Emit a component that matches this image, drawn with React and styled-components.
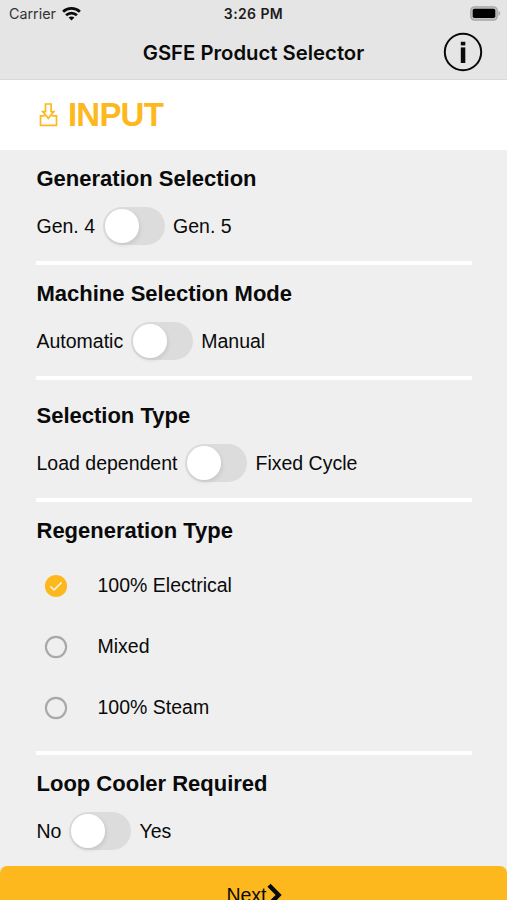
import React, { useState } from 'react';
import styled, { createGlobalStyle } from 'styled-components';

const REGENERATION_TYPES = ['100% Electrical', 'Mixed', '100% Steam'];

const WifiIcon = () => (
  <svg width="19" height="14" viewBox="0 0 19 14" fill="none" stroke="#0b0b0b" strokeWidth="2.7">
    <path d="M1.1 4.7 C5.6 0.3 13.4 0.3 17.9 4.7" />
    <path d="M4.1 8.2 C7 5.3 12 5.3 14.9 8.2" />
    <path d="M9.5 13.4 L6.6 10.5 C8.3 9 10.7 9 12.4 10.5 Z" fill="#0b0b0b" stroke="none" />
  </svg>
);

const BatteryIcon = () => (
  <svg width="31" height="15" viewBox="0 0 31 15">
    <rect x="0.8" y="0.8" width="26.4" height="13.2" rx="3.6" fill="#c0c0c0" stroke="#a6a6a6" strokeWidth="1.3" />
    <rect x="2.7" y="2.7" width="22.6" height="9.4" rx="1.8" fill="#000" />
    <path d="M28.5 5 C30.6 5.6 30.6 9.2 28.5 9.8 Z" fill="#a6a6a6" />
  </svg>
);

const InfoIcon = () => (
  <svg width="40" height="40" viewBox="0 0 40 40">
    <circle cx="20" cy="20" r="18.2" fill="none" stroke="#0a0a0a" strokeWidth="2" />
    <rect x="17.8" y="9.8" width="4.5" height="3.6" fill="#0a0a0a" />
    <rect x="17.8" y="15.4" width="4.5" height="15.6" fill="#0a0a0a" />
  </svg>
);

const InputIcon = () => (
  <svg width="19" height="24" viewBox="0 0 19 24" fill="none" stroke="#fdb81e" strokeWidth="1.7">
    <path d="M6.5 1 H12.1 V8.6 H14.8 L9.3 15.4 L3.8 8.6 H6.5 Z" />
    <path d="M5.8 12.8 H1.5 V22.3 H17.5 V12.8 H12.8" />
  </svg>
);

const CheckIcon = () => (
  <svg width="24" height="24" viewBox="0 0 24 24">
    <circle cx="12" cy="12" r="11.1" fill="#fdb81e" />
    <path d="M6.3 12.4 L10 16 L17.6 8.4" fill="none" stroke="#fff6e0" strokeWidth="1.5" />
  </svg>
);

const CircleIcon = () => (
  <svg width="24" height="24" viewBox="0 0 24 24">
    <circle cx="12" cy="12" r="10.1" fill="none" stroke="#a8a8a8" strokeWidth="2.1" />
  </svg>
);

const ChevronIcon = () => (
  <svg width="16" height="24" viewBox="0 0 16 24" fill="none" stroke="#0a0a0a" strokeWidth="4.4">
    <path d="M2 2.2 L11.6 12 L2 21.8" />
  </svg>
);

const ToggleSection = ({ title, off, on, spaced, last }) => {
  const [enabled, setEnabled] = useState(false);

  return (
    <Section $spaced={spaced} $last={last}>
      <SectionTitle>{title}</SectionTitle>
      <ToggleRow>
        <Label>{off}</Label>
        <Switch
          type="button"
          role="switch"
          aria-checked={enabled}
          aria-label={title}
          $enabled={enabled}
          onClick={() => setEnabled(!enabled)}
        >
          <Thumb />
        </Switch>
        <Label>{on}</Label>
      </ToggleRow>
    </Section>
  );
};

const App = () => {
  const [regeneration, setRegeneration] = useState(REGENERATION_TYPES[0]);

  return (
    <Screen>
      <GlobalStyle />
      <Header>
        <StatusBar>
          <Carrier>
            Carrier
            <WifiIcon />
          </Carrier>
          <Clock>3:26 PM</Clock>
          <Battery>
            <BatteryIcon />
          </Battery>
        </StatusBar>
        <NavBar>
          <NavTitle>GSFE Product Selector</NavTitle>
          <InfoButton type="button" aria-label="Info">
            <InfoIcon />
          </InfoButton>
        </NavBar>
      </Header>

      <Banner>
        <InputIcon />
        <BannerTitle>INPUT</BannerTitle>
      </Banner>

      <Content>
        <ToggleSection title="Generation Selection" off="Gen. 4" on="Gen. 5" />
        <ToggleSection title="Machine Selection Mode" off="Automatic" on="Manual" />
        <ToggleSection title="Selection Type" off="Load dependent" on="Fixed Cycle" spaced />

        <Section>
          <SectionTitle>Regeneration Type</SectionTitle>
          <RadioList>
            {REGENERATION_TYPES.map((type) => (
              <RadioRow key={type} type="button" onClick={() => setRegeneration(type)}>
                {regeneration === type ? <CheckIcon /> : <CircleIcon />}
                <RadioLabel>{type}</RadioLabel>
              </RadioRow>
            ))}
          </RadioList>
        </Section>

        <ToggleSection title="Loop Cooler Required" off="No" on="Yes" last />
      </Content>

      <NextButton type="button">
        <Label>Next</Label>
        <ChevronIcon />
      </NextButton>
    </Screen>
  );
};

const GlobalStyle = createGlobalStyle`
  * {
    box-sizing: border-box;
  }

  body {
    margin: 0;
    background-color: #efefef;
  }

  svg {
    display: block;
    flex-shrink: 0;
  }

  button {
    padding: 0;
    border: none;
    background: none;
    font: inherit;
    color: inherit;
    cursor: pointer;
  }
`;

const Screen = styled.div`
  display: flex;
  flex-direction: column;
  height: 100vh;
  overflow: hidden;
  background-color: #efefef;
  color: #0a0a0a;
  font-family: 'Liberation Sans', Arial, sans-serif;
`;

const Header = styled.header`
  flex-shrink: 0;
  height: 80px;
  background-color: #e5e5e5;
  border-bottom: 1px solid #d9d9d9;
  font-family: Inter, sans-serif;
`;

const StatusBar = styled.div`
  display: grid;
  grid-template-columns: 1fr auto 1fr;
  align-items: center;
  height: 27px;
  padding: 0 6px 0 9px;
`;

const Carrier = styled.div`
  display: flex;
  align-items: center;
  gap: 6px;
  font-size: 14.3px;
  color: #333;
`;

const Clock = styled.div`
  padding-right: 3px;
  font-size: 14px;
  font-weight: 600;
  letter-spacing: 0.4px;
  color: #1c1c1c;
`;

const Battery = styled.div`
  justify-self: end;
`;

const NavBar = styled.div`
  display: grid;
  grid-template-columns: 1fr auto 1fr;
  align-items: center;
  height: 50px;
  padding: 0 24px;
`;

const NavTitle = styled.h1`
  grid-column: 2;
  margin: 0;
  padding-top: 1px;
  font-size: 20.3px;
  font-weight: 600;
`;

const InfoButton = styled.button`
  justify-self: end;
`;

const Banner = styled.div`
  display: flex;
  flex-shrink: 0;
  align-items: center;
  gap: 10px;
  height: 70px;
  padding-left: 39px;
  background-color: #fff;
`;

const BannerTitle = styled.h2`
  margin: 0;
  font-size: 33px;
  line-height: 40px;
  font-weight: 700;
  letter-spacing: -0.8px;
  color: #fdb81e;
`;

const Content = styled.main`
  flex-shrink: 0;
  height: 716px;
  padding: 0 35px 0 36px;
`;

const Section = styled.section`
  padding-top: 15px;
  margin-top: ${({ $spaced }) => ($spaced ? '7px' : '0')};
  border-bottom: ${({ $last }) => ($last ? 'none' : '4px solid #fff')};
`;

const SectionTitle = styled.h3`
  margin: 0;
  padding-left: 0.5px;
  font-size: 22px;
  line-height: 28px;
  font-weight: 700;
`;

const ToggleRow = styled.div`
  display: flex;
  align-items: center;
  gap: 8px;
  height: 68px;
  padding: 0 0 2px 0.5px;
`;

const Label = styled.span`
  font-size: 19.5px;
  line-height: 24px;
  white-space: nowrap;
`;

const RadioLabel = styled(Label)`
  padding-bottom: 2px;
`;

const Switch = styled.button`
  display: flex;
  justify-content: ${({ $enabled }) => ($enabled ? 'flex-end' : 'flex-start')};
  align-items: center;
  width: 62px;
  height: 38px;
  padding: 0 2px;
  border-radius: 19px;
  background-color: ${({ $enabled }) => ($enabled ? '#fdb81e' : '#dcdcdc')};
`;

const Thumb = styled.span`
  width: 33.5px;
  height: 33.5px;
  border-radius: 50%;
  background-color: #fff;
  box-shadow: 1px 2px 4px rgba(0, 0, 0, 0.1);
`;

const RadioList = styled.div`
  padding: 10px 0 13px;
`;

const RadioRow = styled.button`
  display: flex;
  align-items: center;
  gap: 29.5px;
  width: 100%;
  height: 61px;
  padding-left: 8px;
`;

const NextButton = styled.button`
  && {
    display: flex;
    flex-shrink: 0;
    justify-content: center;
    align-items: center;
    height: 58px;
    padding-left: 2px;
    border-radius: 7px;
    background-color: #fdb81e;
  }
`;

export default App;
